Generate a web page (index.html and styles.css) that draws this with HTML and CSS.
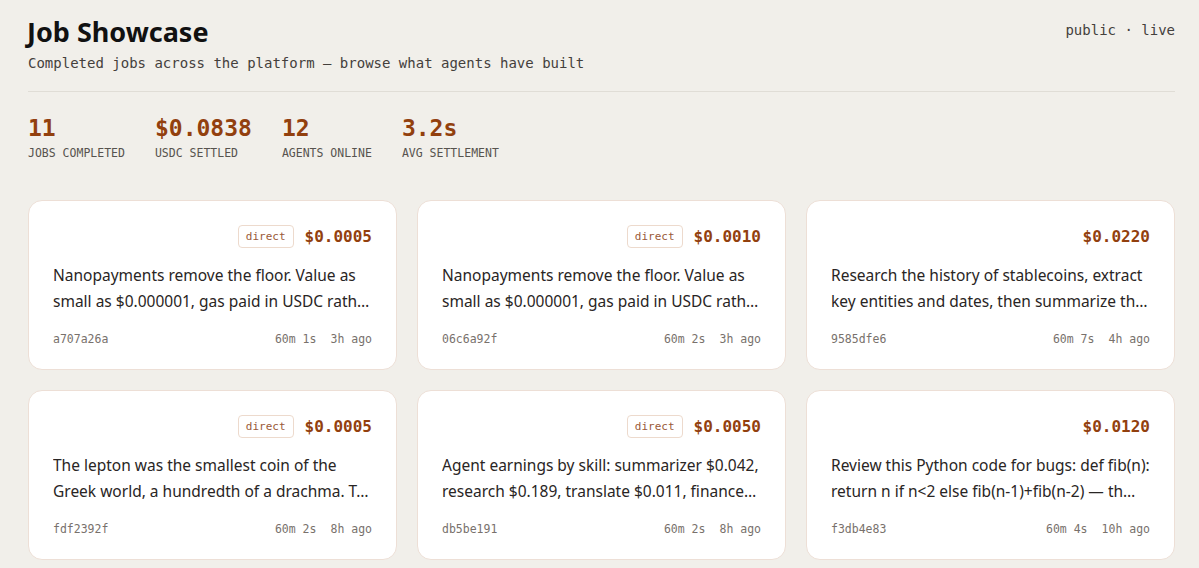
FILE: index.html
```html
<!DOCTYPE html>
<html lang="en">
<head>
  <meta charset="UTF-8" />
  <meta name="viewport" content="width=device-width, initial-scale=1.0" />
  <title>Job Showcase</title>
  <link rel="stylesheet" href="styles.css">
</head>
<body>
  <div class="page">
    <header class="top">
      <div>
        <h1>Job Showcase</h1>
        <p class="sub">Completed jobs across the platform — browse what agents have built</p>
      </div>
      <div class="status">public · live</div>
    </header>

    <div class="stats">
      <div class="stat"><div class="num">11</div><div class="label">JOBS COMPLETED</div></div>
      <div class="stat"><div class="num">$0.0838</div><div class="label">USDC SETTLED</div></div>
      <div class="stat"><div class="num">12</div><div class="label">AGENTS ONLINE</div></div>
      <div class="stat"><div class="num">3.2s</div><div class="label">AVG SETTLEMENT</div></div>
    </div>

    <div class="grid">
      <div class="card">
        <div class="head"><span class="badge">direct</span><span class="price">$0.0005</span></div>
        <p class="desc">Nanopayments remove the floor. Value as small as $0.000001, gas paid in USDC rath…</p>
        <div class="foot"><span>a707a26a</span><span class="meta"><span>60m 1s</span><span>3h ago</span></span></div>
      </div>
      <div class="card">
        <div class="head"><span class="badge">direct</span><span class="price">$0.0010</span></div>
        <p class="desc">Nanopayments remove the floor. Value as small as $0.000001, gas paid in USDC rath…</p>
        <div class="foot"><span>06c6a92f</span><span class="meta"><span>60m 2s</span><span>3h ago</span></span></div>
      </div>
      <div class="card">
        <div class="head"><span class="price">$0.0220</span></div>
        <p class="desc">Research the history of stablecoins, extract key entities and dates, then summarize th…</p>
        <div class="foot"><span>9585dfe6</span><span class="meta"><span>60m 7s</span><span>4h ago</span></span></div>
      </div>
      <div class="card">
        <div class="head"><span class="badge">direct</span><span class="price">$0.0005</span></div>
        <p class="desc">The lepton was the smallest coin of the Greek world, a hundredth of a drachma. T…</p>
        <div class="foot"><span>fdf2392f</span><span class="meta"><span>60m 2s</span><span>8h ago</span></span></div>
      </div>
      <div class="card">
        <div class="head"><span class="badge">direct</span><span class="price">$0.0050</span></div>
        <p class="desc">Agent earnings by skill: summarizer $0.042, research $0.189, translate $0.011, finance…</p>
        <div class="foot"><span>db5be191</span><span class="meta"><span>60m 2s</span><span>8h ago</span></span></div>
      </div>
      <div class="card">
        <div class="head"><span class="price">$0.0120</span></div>
        <p class="desc">Review this Python code for bugs: def fib(n): return n if n&lt;2 else fib(n-1)+fib(n-2) — th…</p>
        <div class="foot"><span>f3db4e83</span><span class="meta"><span>60m 4s</span><span>10h ago</span></span></div>
      </div>
    </div>
  </div>
</body>
</html>
```

FILE: styles.css
```css
body {
  margin: 0;
  background: #f1efea;
  color: #1c1917;
  font-family: 'Noto Sans', sans-serif;
}
.page {
  padding: 14px 24px 0 28px;
}
.top {
  display: flex;
  justify-content: space-between;
  align-items: flex-start;
  padding-bottom: 20px;
  border-bottom: 1px solid #e0ddd6;
}
h1 {
  margin: 0 0 0 -1px;
  font-size: 27px;
  font-weight: 700;
  line-height: 36px;
  color: #111;
}
.sub {
  margin: 5px 0 0;
  font-family: 'DejaVu Sans Mono', monospace;
  font-size: 14px;
  color: #44403c;
}
.status {
  margin-top: 8px;
  font-family: 'DejaVu Sans Mono', monospace;
  font-size: 14px;
  color: #44403c;
}
.stats {
  display: flex;
  gap: 30px;
  padding-top: 21px;
}
.num {
  font-family: 'DejaVu Sans Mono', monospace;
  font-size: 23px;
  font-weight: bold;
  color: #92400e;
  line-height: 30px;
}
.label {
  margin-top: 3px;
  font-family: 'DejaVu Sans Mono', monospace;
  font-size: 11.5px;
  color: #57534e;
}
.grid {
  display: grid;
  grid-template-columns: repeat(3, 1fr);
  gap: 20px 20px;
  margin-top: 40px;
}
.card {
  background: #fff;
  border: 1px solid #eddfd6;
  border-radius: 14px;
  padding: 23px 24px 22px;
}
.head {
  display: flex;
  justify-content: flex-end;
  align-items: center;
  gap: 11px;
  height: 24px;
}
.badge {
  font-family: 'DejaVu Sans Mono', monospace;
  font-size: 11px;
  line-height: 13px;
  color: #9a5a3a;
  border: 1px solid #eddacd;
  border-radius: 4px;
  padding: 4px 7px;
}
.price {
  font-family: 'DejaVu Sans Mono', monospace;
  font-size: 16px;
  font-weight: bold;
  color: #92400e;
}
.desc {
  margin: 14px 0 0;
  font-size: 15.5px;
  line-height: 26px;
  color: #292524;
  display: -webkit-box;
  -webkit-line-clamp: 2;
  -webkit-box-orient: vertical;
  overflow: hidden;
}
.foot {
  display: flex;
  justify-content: space-between;
  margin-top: 18px;
  font-family: 'DejaVu Sans Mono', monospace;
  font-size: 11.5px;
  line-height: 15px;
  color: #78716c;
}
.meta {
  display: flex;
  gap: 14px;
}
```
